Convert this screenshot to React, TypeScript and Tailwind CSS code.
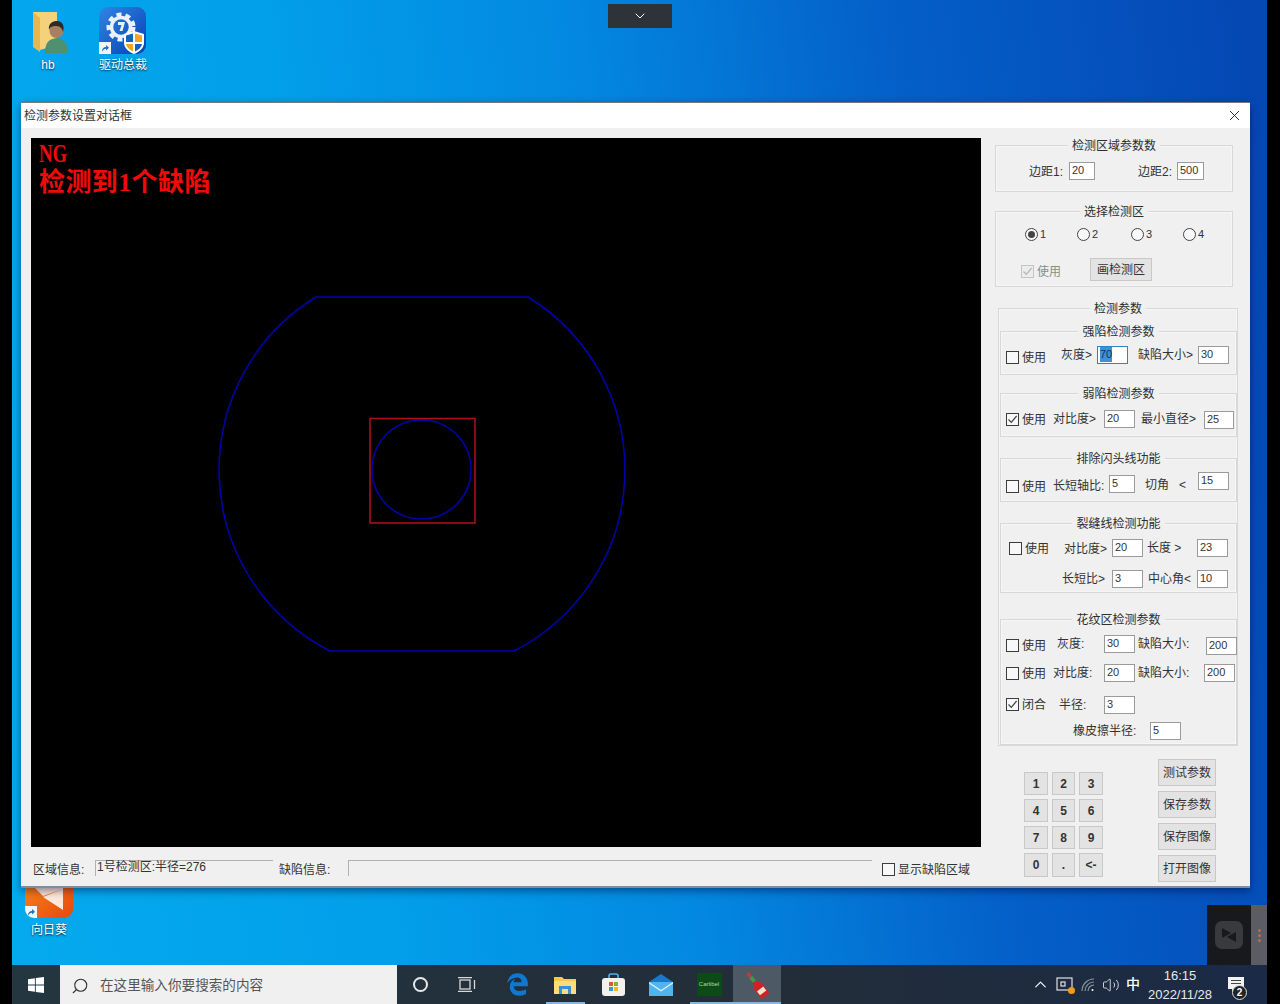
import { ReactNode } from 'react';
import { X, ChevronDown, ChevronUp, Search, Volume2 } from 'lucide-react';
import { FaEdgeLegacy } from 'react-icons/fa';

const TEXT_FONT = "font-['Liberation_Sans','Noto_Sans_CJK_SC',sans-serif]";

const Group = ({ title, className, children }: { title: string; className: string; children?: ReactNode }) => (
    <div className={`relative box-border border border-[#d8d8d8] shadow-[inset_0_0_0_1px_#f6f6f6] ${className}`}>
        <div className="absolute -top-[8px] left-0 right-0 flex justify-center">
            <span className="bg-[#f0f0f0] px-[4px] text-[12px] leading-[16px] text-[#2e2e2e] whitespace-nowrap">{title}</span>
        </div>
        {children}
    </div>
);

const Field = ({ value, className = '', focused = false }: { value: string; className?: string; focused?: boolean }) => (
    <div className={`box-border h-[18px] shrink-0 border bg-white pl-[2px] text-[11px] leading-[15px] text-[#333] ${focused ? 'border-[#2b83c9]' : 'border-[#9a9a9a]'} ${className}`}>
        {focused ? <span className="inline-block bg-[#3f8fdc] text-[#12335c]">{value}</span> : value}
    </div>
);

const Label = ({ children, className = '' }: { children: ReactNode; className?: string }) => (
    <div className={`h-[18px] shrink-0 whitespace-nowrap text-[12px] leading-[18px] text-[#333] ${className}`}>{children}</div>
);

const Check = ({ label, checked = false, className = '', disabled = false }: { label?: string; checked?: boolean; className?: string; disabled?: boolean }) => (
    <div className={`flex h-[13px] shrink-0 items-center gap-[3px] text-[12px] ${disabled ? 'text-[#8c8c8c]' : 'text-[#333]'} ${className}`}>
        <span className={`flex h-[13px] w-[13px] shrink-0 items-center justify-center border ${disabled ? 'border-[#c4c4c4] bg-[#ececec]' : 'border-[#3c3c3c] bg-[#f8f8f8]'}`}>
            {checked && (
                <svg width="11" height="11" viewBox="0 0 11 11" fill="none">
                    <path d="M1.5 5.5 L4.3 8.4 L9.6 2" stroke={disabled ? '#b5b5b5' : '#444'} strokeWidth="1.2" />
                </svg>
            )}
        </span>
        {label && <span className="whitespace-nowrap leading-[13px] translate-y-[1px]">{label}</span>}
    </div>
);

const Radio = ({ label, checked = false, className = '' }: { label: string; checked?: boolean; className?: string }) => (
    <div className={`flex h-[13px] items-center gap-[2px] text-[11px] text-[#333] ${className}`}>
        <span className="flex h-[13px] w-[13px] items-center justify-center rounded-full border border-[#444] bg-[#f8f8f8]">
            {checked && <span className="h-[7px] w-[7px] rounded-full bg-[#444]" />}
        </span>
        {label}
    </div>
);

const Btn = ({ children, className = '' }: { children: ReactNode; className?: string }) => (
    <div className={`flex items-center justify-center border border-[#c8c8c8] bg-[#e3e3e3] text-[12px] text-[#333] ${className}`}>{children}</div>
);

const Shortcut = () => (
    <svg width="12" height="12" viewBox="0 0 12 12">
        <rect width="12" height="12" fill="#f4f4f4" />
        <path d="M3 10 C3 6.5 4.5 5 7 5 V3 L10 5.8 L7 8.5 V6.8 C5.5 6.8 4.3 7.6 3 10Z" fill="#2a6fc0" />
    </svg>
);

const FolderIcon = () => (
    <svg width="36" height="42" viewBox="0 0 36 42">
        <path d="M0 1 H24 V34 L7 39 Z" fill="#f4d27c" />
        <path d="M0 1 L7 7 V41 L0 36 Z" fill="#e8b64c" />
        <path d="M12 42 C12 31 16 28 24 27 C31 28 35 32 35 42 Z" fill="#4f9070" />
        <circle cx="23.5" cy="20" r="7" fill="#a97f62" />
        <path d="M16 19 C15 12 20 10 24 10 C29 10 32 14 30 21 C29 16 26 15 22 15 C19 15 17 16 16 19Z" fill="#2f2a28" />
    </svg>
);

const DriverIcon = () => (
    <svg width="47" height="47" viewBox="0 0 47 47">
        <defs>
            <linearGradient id="drv" x1="0" y1="0" x2="1" y2="1">
                <stop offset="0" stopColor="#2f86e4" />
                <stop offset="1" stopColor="#0a3fb4" />
            </linearGradient>
        </defs>
        <rect width="47" height="47" rx="9" fill="url(#drv)" />
        {/* engrane */}
        <circle cx="22" cy="20" r="12.5" fill="none" stroke="#e9f2fb" strokeWidth="4" strokeDasharray="5 4" />
        <circle cx="22" cy="20" r="9.5" fill="none" stroke="#e9f2fb" strokeWidth="3.5" />
        <path d="M19 15 H26 L23.5 24 H20.5 L22.5 18 H19 Z" fill="#e9f2fb" />
        <path d="M25 27 L35 24 L45 27 V36 C45 41 40 45 35 47 C30 45 25 41 25 36 Z" fill="#fff" />
        <path d="M27 28.5 L34 26.5 V35 H27 Z" fill="#1464bf" />
        <path d="M36 26.5 L43 28.5 V35 H36 Z" fill="#f2a81c" />
        <path d="M27 37 H34 V44.5 C30 43 27.5 40 27 37 Z" fill="#f2a81c" />
        <path d="M36 37 H43 C42.5 40 40 43 36 44.5 Z" fill="#1464bf" />
    </svg>
);

const WinLogo = () => (
    <svg width="16" height="16" viewBox="0 0 16 16" fill="#fff">
        <path d="M0 2.2 L6.9 1.2 V7.5 H0 Z M7.8 1.1 L16 0 V7.5 H7.8 Z M0 8.4 H6.9 V14.8 L0 13.8 Z M7.8 8.4 H16 V16 L7.8 14.9 Z" />
    </svg>
);

const TaskSlot = ({ children, className = '', line }: { children: ReactNode; className?: string; line?: ReactNode }) => (
    <div className={`relative flex h-full w-[48px] shrink-0 items-center justify-center ${className}`}>
        {children}
        {line}
    </div>
);

const ExplorerIcon = () => (
    <svg width="22" height="19" viewBox="0 0 22 19">
        <path d="M0 2 H8 L10 4 H22 V19 H0 Z" fill="#f6c94e" />
        <path d="M0 6 H22 V19 H0 Z" fill="#fbdc78" />
        <path d="M5 11 H17 V19 H14 V14 H8 V19 H5 Z" fill="#3b8fd6" />
    </svg>
);

const StoreIcon = () => (
    <svg width="23" height="23" viewBox="0 0 23 23">
        <path d="M7 6 V3 Q7 1 9 1 H14 Q16 1 16 3 V6" fill="none" stroke="#4fb2e8" strokeWidth="1.6" />
        <rect x="0" y="5" width="23" height="18" rx="3" fill="#f4f1ec" />
        <rect x="7" y="9" width="4" height="4" fill="#e8552c" />
        <rect x="12" y="9" width="4" height="4" fill="#7fb82c" />
        <rect x="7" y="14" width="4" height="4" fill="#2a9be6" />
        <rect x="12" y="14" width="4" height="4" fill="#f5b81c" />
    </svg>
);

const MailIcon = () => (
    <svg width="24" height="22" viewBox="0 0 24 22">
        <path d="M0 8 L12 0 L24 8 V22 H0 Z" fill="#1a78cc" />
        <path d="M0 8 H24 V22 H0 Z" fill="#52b4ee" />
        <path d="M0 8 L12 16 L24 8 V9.5 L12 17.5 L0 9.5 Z" fill="#dff1fc" />
    </svg>
);

const BottleIcon = () => (
    <svg width="24" height="28" viewBox="0 0 24 28">
        <g transform="rotate(-38 12 14)">
            <rect x="10.5" y="-1" width="3" height="5" fill="#c8383a" />
            <rect x="10" y="4" width="4" height="6" fill="#3a9a4a" />
            <path d="M10 10 H14 L17 16 V28 H7 V16 Z" fill="#cf2226" />
            <rect x="8" y="19" width="8" height="5" fill="#efe3c9" />
        </g>
    </svg>
);

const App = () => {
    return (
        <div className={`flex h-[1004px] w-[1280px] overflow-hidden bg-black ${TEXT_FONT}`}>
            <div className="relative ml-[12px] flex h-full w-[1255px] flex-col bg-[linear-gradient(82deg,#05aaee_0%,#029fea_28%,#0388e0_50%,#0460ca_72%,#0546b2_100%)]">
                <div className="flex-1" />

                {/* iconos del escritorio */}
                <div className="absolute left-[21px] top-[11px]"><FolderIcon /></div>
                <div className="absolute left-[6px] top-[58px] w-[60px] text-center text-[12px] leading-[15px] text-white [text-shadow:0_1px_2px_rgba(0,0,0,0.8)]">hb</div>
                <div className="absolute left-[87px] top-[7px]">
                    <DriverIcon />
                    <div className="absolute bottom-0 left-0"><Shortcut /></div>
                </div>
                <div className="absolute left-[76px] top-[58px] w-[70px] text-center text-[12px] leading-[15px] text-white [text-shadow:0_1px_2px_rgba(0,0,0,0.8)]">驱动总裁</div>
                <div className="absolute left-[13px] top-[871px] h-[47px] w-[48px] overflow-hidden rounded-[9px] bg-[linear-gradient(135deg,#f88a1c,#e8480c)]">
                    <svg width="48" height="47" viewBox="0 0 48 47" className="absolute inset-0">
                        <path d="M10 17 H38 V18 L18 25 Z M38 18 V39 L18 26 Z" fill="#fbe9dc" />
                    </svg>
                    <div className="absolute bottom-0 left-0"><Shortcut /></div>
                </div>
                <div className="absolute left-[2px] top-[923px] w-[70px] text-center text-[12px] leading-[15px] text-white [text-shadow:0_1px_2px_rgba(0,0,0,0.8)]">向日葵</div>

                <div className="absolute left-[596px] top-[4px] flex h-[24px] w-[64px] items-center justify-center bg-[#2d3338]">
                    <ChevronDown size={16} strokeWidth={1.5} className="text-white" />
                </div>

                {/* ventana flotante */}
                <div className="absolute right-0 top-[905px] flex h-[60px] w-[60px]">
                    <div className="flex w-[44px] items-center justify-center bg-[#17191d]">
                        <div className="flex h-[28px] w-[28px] items-center justify-center rounded-[7px] bg-[#393a3e]">
                            <svg width="18" height="18" viewBox="0 0 18 18">
                                <path d="M2 2 V12 L11 7 Z M16 16 V6 L7 11 Z" fill="#17191d" />
                            </svg>
                        </div>
                    </div>
                    <div className="flex flex-1 flex-col items-center justify-center gap-[2px] bg-[#5c5d64]">
                        <span className="h-[3px] w-[3px] rounded-full bg-[#b5704a]" />
                        <span className="h-[3px] w-[3px] rounded-full bg-[#b5704a]" />
                        <span className="h-[3px] w-[3px] rounded-full bg-[#b5704a]" />
                    </div>
                </div>

                {/* dialogo */}
                <div className="absolute left-[9px] top-[102px] flex h-[786px] w-[1229px] flex-col border-t border-t-[#777] border-b-2 border-b-[#7b8da4] bg-[#f0f0f0] shadow-[0_3px_8px_rgba(0,0,40,0.45)]">
                    <div className="flex h-[25px] shrink-0 items-center justify-between bg-white pl-[3px] pr-[7px]">
                        <span className="text-[12px] text-[#333]">检测参数设置对话框</span>
                        <X size={17} strokeWidth={1.3} className="text-[#222]" />
                    </div>

                    <div className="flex flex-1 pl-[10px] pt-[10px]">
                        <div className="w-[950px] shrink-0">
                            <div className="relative h-[709px] w-[950px] bg-black">
                                <svg width="950" height="709" viewBox="31 138 950 709" className="absolute inset-0" fill="none">
                                    <path d="M316 297 H528 A203 203 0 0 1 514 651 H330 A203 203 0 0 1 316 297 Z" stroke="#0000b0" strokeWidth="1.5" />
                                    <circle cx="421.5" cy="469.5" r="49.5" stroke="#0000b0" strokeWidth="1.5" />
                                    <rect x="370" y="418.5" width="105" height="104.5" stroke="#b01018" strokeWidth="1.5" />
                                </svg>
                                <div className="absolute left-[8px] top-[1px] font-bold text-[#f00a0a]">
                                    <div className="origin-left scale-x-[0.72] font-['Liberation_Serif'] text-[26px] leading-[29px]">NG</div>
                                    <div className="font-['Liberation_Serif','Noto_Sans_CJK_SC',serif] text-[26px] leading-[29px] tracking-[0.4px]">检测到1个缺陷</div>
                                </div>
                            </div>

                            <div className="mt-[13px] flex items-start pl-[2px]">
                                <Label className="mt-[1px] w-[62px]">区域信息:</Label>
                                <div className="box-border h-[16px] w-[178px] border-t border-l border-[#b0b0b0] pl-[1px] text-[12px] leading-[13px] text-[#333]">1号检测区:半径=276</div>
                                <Label className="ml-[6px] mt-[1px] w-[69px]">缺陷信息:</Label>
                                <div className="box-border h-[16px] w-[524px] border-t border-l border-[#b0b0b0]" />
                                <Check className="ml-[10px] mt-[3px]" label="显示缺陷区域" />
                            </div>
                        </div>

                        <div className="ml-[14px] flex-1">
                            <Group title="检测区域参数数" className="mt-[7px] h-[47px] w-[238px]">
                                <div className="flex pl-[33px] pt-[16px]">
                                    <Label className="mt-[1px] w-[40px]">边距1:</Label>
                                    <Field value="20" className="w-[26px]" />
                                    <Label className="ml-[43px] mt-[1px] w-[39px]">边距2:</Label>
                                    <Field value="500" className="w-[27px]" />
                                </div>
                            </Group>

                            <Group title="选择检测区" className="mt-[19px] h-[76px] w-[238px]">
                                <div className="flex pl-[29px] pt-[16px]">
                                    <Radio label="1" checked className="w-[52px]" />
                                    <Radio label="2" className="w-[54px]" />
                                    <Radio label="3" className="w-[52px]" />
                                    <Radio label="4" />
                                </div>
                                <div className="mt-[17px] flex pl-[25px]">
                                    <Check label="使用" checked disabled className="mt-[7px] w-[69px]" />
                                    <Btn className="h-[23px] w-[62px]">画检测区</Btn>
                                </div>
                            </Group>

                            <Group title="检测参数" className="ml-[3px] mt-[21px] h-[438px] w-[240px] pl-[1px] pt-[22px]">
                                <Group title="强陷检测参数" className="h-[44px] w-[237px]">
                                    <div className="flex pl-[5px] pt-[14px]">
                                        <Check label="使用" className="mt-[5px] w-[55px]" />
                                        <Label className="w-[36px]">灰度&gt;</Label>
                                        <Field value="70" focused className="w-[31px]" />
                                        <Label className="ml-[10px] w-[60px]">缺陷大小&gt;</Label>
                                        <Field value="30" className="w-[31px]" />
                                    </div>
                                </Group>

                                <Group title="弱陷检测参数" className="mt-[18px] h-[44px] w-[237px]">
                                    <div className="flex pl-[5px] pt-[16px]">
                                        <Check label="使用" checked className="mt-[3px] w-[47px]" />
                                        <Label className="w-[51px]">对比度&gt;</Label>
                                        <Field value="20" className="w-[31px]" />
                                        <Label className="ml-[6px] w-[63px]">最小直径&gt;</Label>
                                        <Field value="25" className="mt-[1px] w-[30px]" />
                                    </div>
                                </Group>

                                <Group title="排除闪头线功能" className="mt-[21px] h-[44px] w-[237px]">
                                    <div className="flex pl-[5px] pt-[13px]">
                                        <Check label="使用" className="mt-[8px] w-[47px]" />
                                        <Label className="mt-[5px] w-[56px]">长短轴比:</Label>
                                        <Field value="5" className="mt-[3px] w-[26px]" />
                                        <Label className="ml-[10px] mt-[4px] w-[53px]">切角&nbsp;&nbsp;&nbsp;&lt;</Label>
                                        <Field value="15" className="w-[31px]" />
                                    </div>
                                </Group>

                                <Group title="裂缝线检测功能" className="mt-[21px] h-[70px] w-[237px]">
                                    <div className="flex pl-[8px] pt-[15px]">
                                        <Check label="使用" className="mt-[3px] w-[55px]" />
                                        <Label className="mt-[1px] w-[48px]">对比度&gt;</Label>
                                        <Field value="20" className="w-[31px]" />
                                        <Label className="ml-[4px] w-[50px]">长度&nbsp;&gt;</Label>
                                        <Field value="23" className="w-[31px]" />
                                    </div>
                                    <div className="mt-[12px] flex pl-[61px]">
                                        <Label className="w-[50px]">长短比&gt;</Label>
                                        <Field value="3" className="w-[31px]" />
                                        <Label className="ml-[5px] w-[49px]">中心角&lt;</Label>
                                        <Field value="10" className="w-[31px]" />
                                    </div>
                                </Group>

                                <Group title="花纹区检测参数" className="mt-[26px] h-[126px] w-[237px]">
                                    <div className="flex pl-[5px] pt-[15px]">
                                        <Check label="使用" className="mt-[4px] w-[51px]" />
                                        <Label className="w-[47px]">灰度:</Label>
                                        <Field value="30" className="w-[31px]" />
                                        <Label className="ml-[3px] w-[68px]">缺陷大小:</Label>
                                        <Field value="200" className="mt-[2px] w-[31px]" />
                                    </div>
                                    <div className="mt-[9px] flex pl-[5px]">
                                        <Check label="使用" className="mt-[3px] w-[47px]" />
                                        <Label className="w-[51px]">对比度:</Label>
                                        <Field value="20" className="w-[31px]" />
                                        <Label className="ml-[3px] w-[66px]">缺陷大小:</Label>
                                        <Field value="200" className="w-[31px]" />
                                    </div>
                                    <div className="mt-[14px] flex pl-[5px]">
                                        <Check label="闭合" checked className="mt-[2px] w-[53px]" />
                                        <Label className="w-[45px]">半径:</Label>
                                        <Field value="3" className="w-[31px]" />
                                    </div>
                                    <div className="mt-[8px] flex pl-[72px]">
                                        <Label className="w-[77px]">橡皮擦半径:</Label>
                                        <Field value="5" className="w-[31px]" />
                                    </div>
                                </Group>
                            </Group>

                            <div className="ml-[29px] mt-[13px] flex items-start">
                                <div className="mt-[13px] grid grid-cols-[24px_23px_24px] grid-rows-[23px_23px_23px_24px] gap-x-[4px] gap-y-[4px]">
                                    {['1', '2', '3', '4', '5', '6', '7', '8', '9', '0', '.', '<-'].map((key) => (
                                        <Btn key={key} className="font-bold">{key}</Btn>
                                    ))}
                                </div>
                                <div className="ml-[55px] flex w-[58px] flex-col gap-[5px]">
                                    <Btn className="h-[27px]">测试参数</Btn>
                                    <Btn className="h-[27px]">保存参数</Btn>
                                    <Btn className="h-[27px]">保存图像</Btn>
                                    <Btn className="h-[27px]">打开图像</Btn>
                                </div>
                            </div>
                        </div>
                    </div>
                </div>

                {/* barra de tareas */}
                <div className="flex h-[39px] shrink-0 items-center bg-[linear-gradient(90deg,#243640,#222d38_60%,#1b2a46)] text-white">
                    <div className="flex h-full w-[48px] shrink-0 items-center justify-center"><WinLogo /></div>
                    <div className="flex h-full w-[337px] shrink-0 items-center gap-[11px] bg-[#f0f0f0] pl-[11px] pt-[3px] text-[13.6px] text-[#555]">
                        <Search size={18} strokeWidth={1.5} className="-scale-x-100 text-[#333]" />
                        <span>在这里输入你要搜索的内容</span>
                    </div>
                    <TaskSlot><span className="h-[15px] w-[15px] -translate-x-[1px] rounded-full border-2 border-[#e8e8e8]" /></TaskSlot>
                    <TaskSlot>
                        <svg width="18" height="15" viewBox="0 0 18 15" fill="none" stroke="#d8d8d8" strokeWidth="1.3" className="-translate-x-[2px]">
                            <rect x="2" y="3" width="10" height="9" />
                            <path d="M0 0.7 H14 M0 14.3 H14 M16.5 3 V12" />
                        </svg>
                    </TaskSlot>
                    <TaskSlot><FaEdgeLegacy size={23} className="text-[#0f78d4]" /></TaskSlot>
                    <TaskSlot line={<span className="absolute bottom-0 left-[5px] h-[2px] w-[39px] bg-[#7fb7e6]" />}><ExplorerIcon /></TaskSlot>
                    <TaskSlot><StoreIcon /></TaskSlot>
                    <TaskSlot><MailIcon /></TaskSlot>
                    <TaskSlot line={<span className="absolute bottom-0 left-[5px] right-0 h-[2px] bg-[#7fb7e6]" />}>
                        <div className="flex h-[23px] w-[25px] items-center justify-center overflow-hidden bg-[#0c4a18] text-[6px] text-[#b6d8a0]">Carlibel</div>
                    </TaskSlot>
                    <TaskSlot className="bg-[#4d5a65]" line={<span className="absolute bottom-0 left-0 right-0 h-[2px] bg-[#7fb7e6]" />}><BottleIcon /></TaskSlot>

                    <div className="ml-auto flex h-full items-center pr-[11px]">
                        <div className="flex w-[24px] justify-center"><ChevronUp size={19} strokeWidth={1.4} /></div>
                        <div className="relative flex w-[24px] justify-center">
                            <svg width="17" height="16" viewBox="0 0 17 16" fill="none" stroke="#e2e2e2" strokeWidth="1.2">
                                <rect x="1" y="1" width="15" height="12" />
                                <rect x="5" y="5" width="4" height="4" />
                            </svg>
                            <span className="absolute bottom-[-1px] right-[1px] h-[7px] w-[7px] rounded-full bg-[#f59a14]" />
                        </div>
                        <div className="flex w-[24px] justify-center">
                            <svg width="14" height="14" viewBox="0 0 14 14" fill="none" stroke="#8b96a0" strokeWidth="1.2">
                                <path d="M1 13 A12 12 0 0 1 13 1 M4 13 A9 9 0 0 1 13 4 M7 13 A6 6 0 0 1 13 7" />
                                <circle cx="11.5" cy="12" r="1" fill="#fff" stroke="none" />
                            </svg>
                        </div>
                        <div className="flex w-[22px] justify-center"><Volume2 size={18} strokeWidth={1.2} className="text-[#e2e2e2]" /></div>
                        <div className="flex w-[22px] justify-center text-[14px] font-medium">中</div>
                        <div className="flex w-[72px] flex-col items-center text-[13px] leading-[19px] text-[#e8e8e8]">
                            <span>16:15</span>
                            <span>2022/11/28</span>
                        </div>
                        <div className="relative flex w-[40px] justify-center">
                            <svg width="17" height="15" viewBox="0 0 17 15">
                                <path d="M0 0 H16 V12 H7 L4 15 V12 H0 Z" fill="#f2f2f2" />
                                <path d="M3 3.5 H13 M3 6.5 H13" stroke="#444" strokeWidth="1" />
                            </svg>
                            <span className="absolute left-[16px] top-[8px] flex h-[15px] w-[15px] items-center justify-center rounded-full border border-[#ddd] bg-[#222] text-[10px] font-bold">2</span>
                        </div>
                    </div>
                </div>
            </div>
        </div>
    );
};

export default App;
